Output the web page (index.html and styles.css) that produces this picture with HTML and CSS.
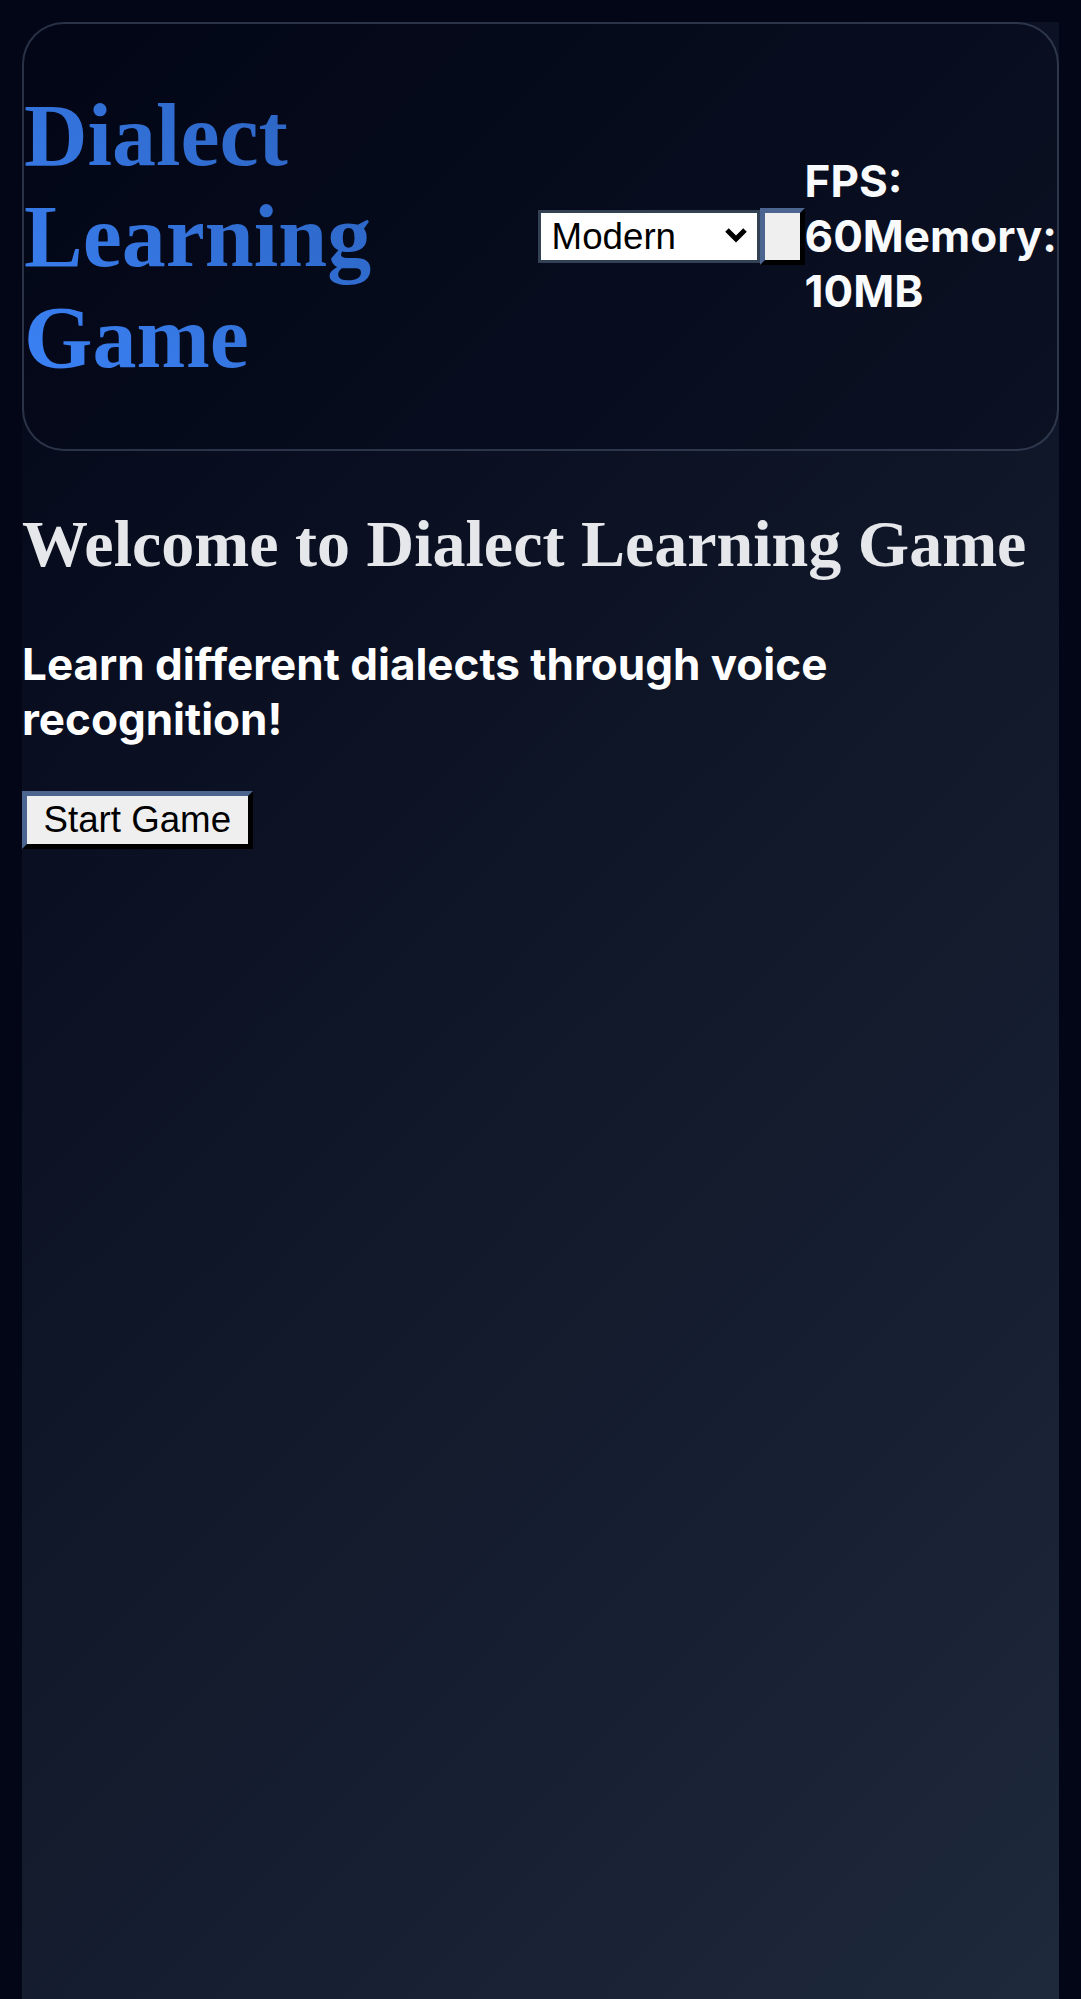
FILE: index.html
```html
<!DOCTYPE html>
<html lang="en">
<head>
<meta charset="utf-8">
<title>Dialect Learning Game</title>
<link rel="stylesheet" href="styles.css">
</head>
<body>
<div class="app">
  <header class="topbar">
    <h1 class="title">Dialect Learning Game</h1>
    <div class="controls">
      <div class="select-wrap">
        <select class="theme-select">
          <option>Modern</option>
          <option>Classic</option>
        </select>
        <svg class="chevron" viewBox="0 0 24 16" width="24" height="16" aria-hidden="true"><path d="M3 3 L12 12 L21 3" fill="none" stroke="#000" stroke-width="5" stroke-linecap="butt" stroke-linejoin="miter"/></svg>
      </div>
      <button class="btn btn-icon" type="button" aria-label="Toggle"></button>
    </div>
    <div class="stats"><span>FPS: 60</span><span>Memory: 10MB</span></div>
  </header>
  <main class="welcome">
    <h2 class="welcome-title">Welcome to Dialect Learning Game</h2>
    <p class="welcome-text">Learn different dialects through voice recognition!</p>
    <button class="btn" type="button">Start Game</button>
  </main>
</div>
</body>
</html>
```
FILE: styles.css
```css
html {
  background: #020617;
}

body {
  margin: 22px 22px 0;
  font-family: "Liberation Serif", serif;
}

.app {
  min-height: calc(100vh - 22px);
  background: linear-gradient(135deg, #020617 0%, #1e293b 100%);
}

.topbar {
  display: flex;
  align-items: center;
  border: 2.5px solid rgba(100, 116, 139, 0.4);
  border-radius: 42px;
  background: rgba(2, 6, 23, 0.3);
}

.title {
  flex: 1 1 0;
  min-width: 0;
  margin: 61px 0;
  font-family: "Liberation Serif", serif;
  font-size: 88px;
  font-weight: bold;
  background: linear-gradient(45deg, #3b82f6 0%, #2658ad 100%);
  -webkit-background-clip: text;
  background-clip: text;
  color: transparent;
}

.controls {
  display: flex;
  align-items: center;
  flex: 0 0 auto;
}

.select-wrap {
  position: relative;
  display: flex;
}

.theme-select {
  -webkit-appearance: none;
  appearance: none;
  width: 222px;
  height: 53px;
  border: 3px solid #334155;
  border-radius: 0;
  background-color: #fff;
  color: #000;
  font-family: "Liberation Sans", Arial, sans-serif;
  font-size: 36.7px;
  padding: 0 0 0 11px;
  margin: 0;
}

.chevron {
  position: absolute;
  right: 12px;
  top: 17px;
  pointer-events: none;
}

.btn {
  font-family: "Liberation Sans", Arial, sans-serif;
  font-size: 36.7px;
  line-height: normal;
  color: #000;
  background: #efefef;
  padding: 2.75px 16.5px;
  border-width: 5.5px;
  border-style: solid;
  border-color: #4b6490 #000 #000 #4b6490;
  border-radius: 0;
  margin: 0;
}

.btn-icon {
  width: 45px;
  height: 57px;
  padding: 0;
}

.stats {
  flex: 0 0 auto;
  width: min-content;
  font-family: Inter, "Noto Sans", sans-serif;
  font-weight: 700;
  font-size: 44px;
  line-height: 55px;
  color: #f8fafc;
}

.welcome-title {
  margin: 55px 0;
  font-family: "Liberation Serif", serif;
  font-size: 66px;
  font-weight: bold;
  color: #e5e7eb;
}

.welcome-text {
  margin: 44px 0;
  font-family: Inter, "Noto Sans", sans-serif;
  font-weight: 700;
  font-size: 44px;
  line-height: 55px;
  color: #fff;
}
```
